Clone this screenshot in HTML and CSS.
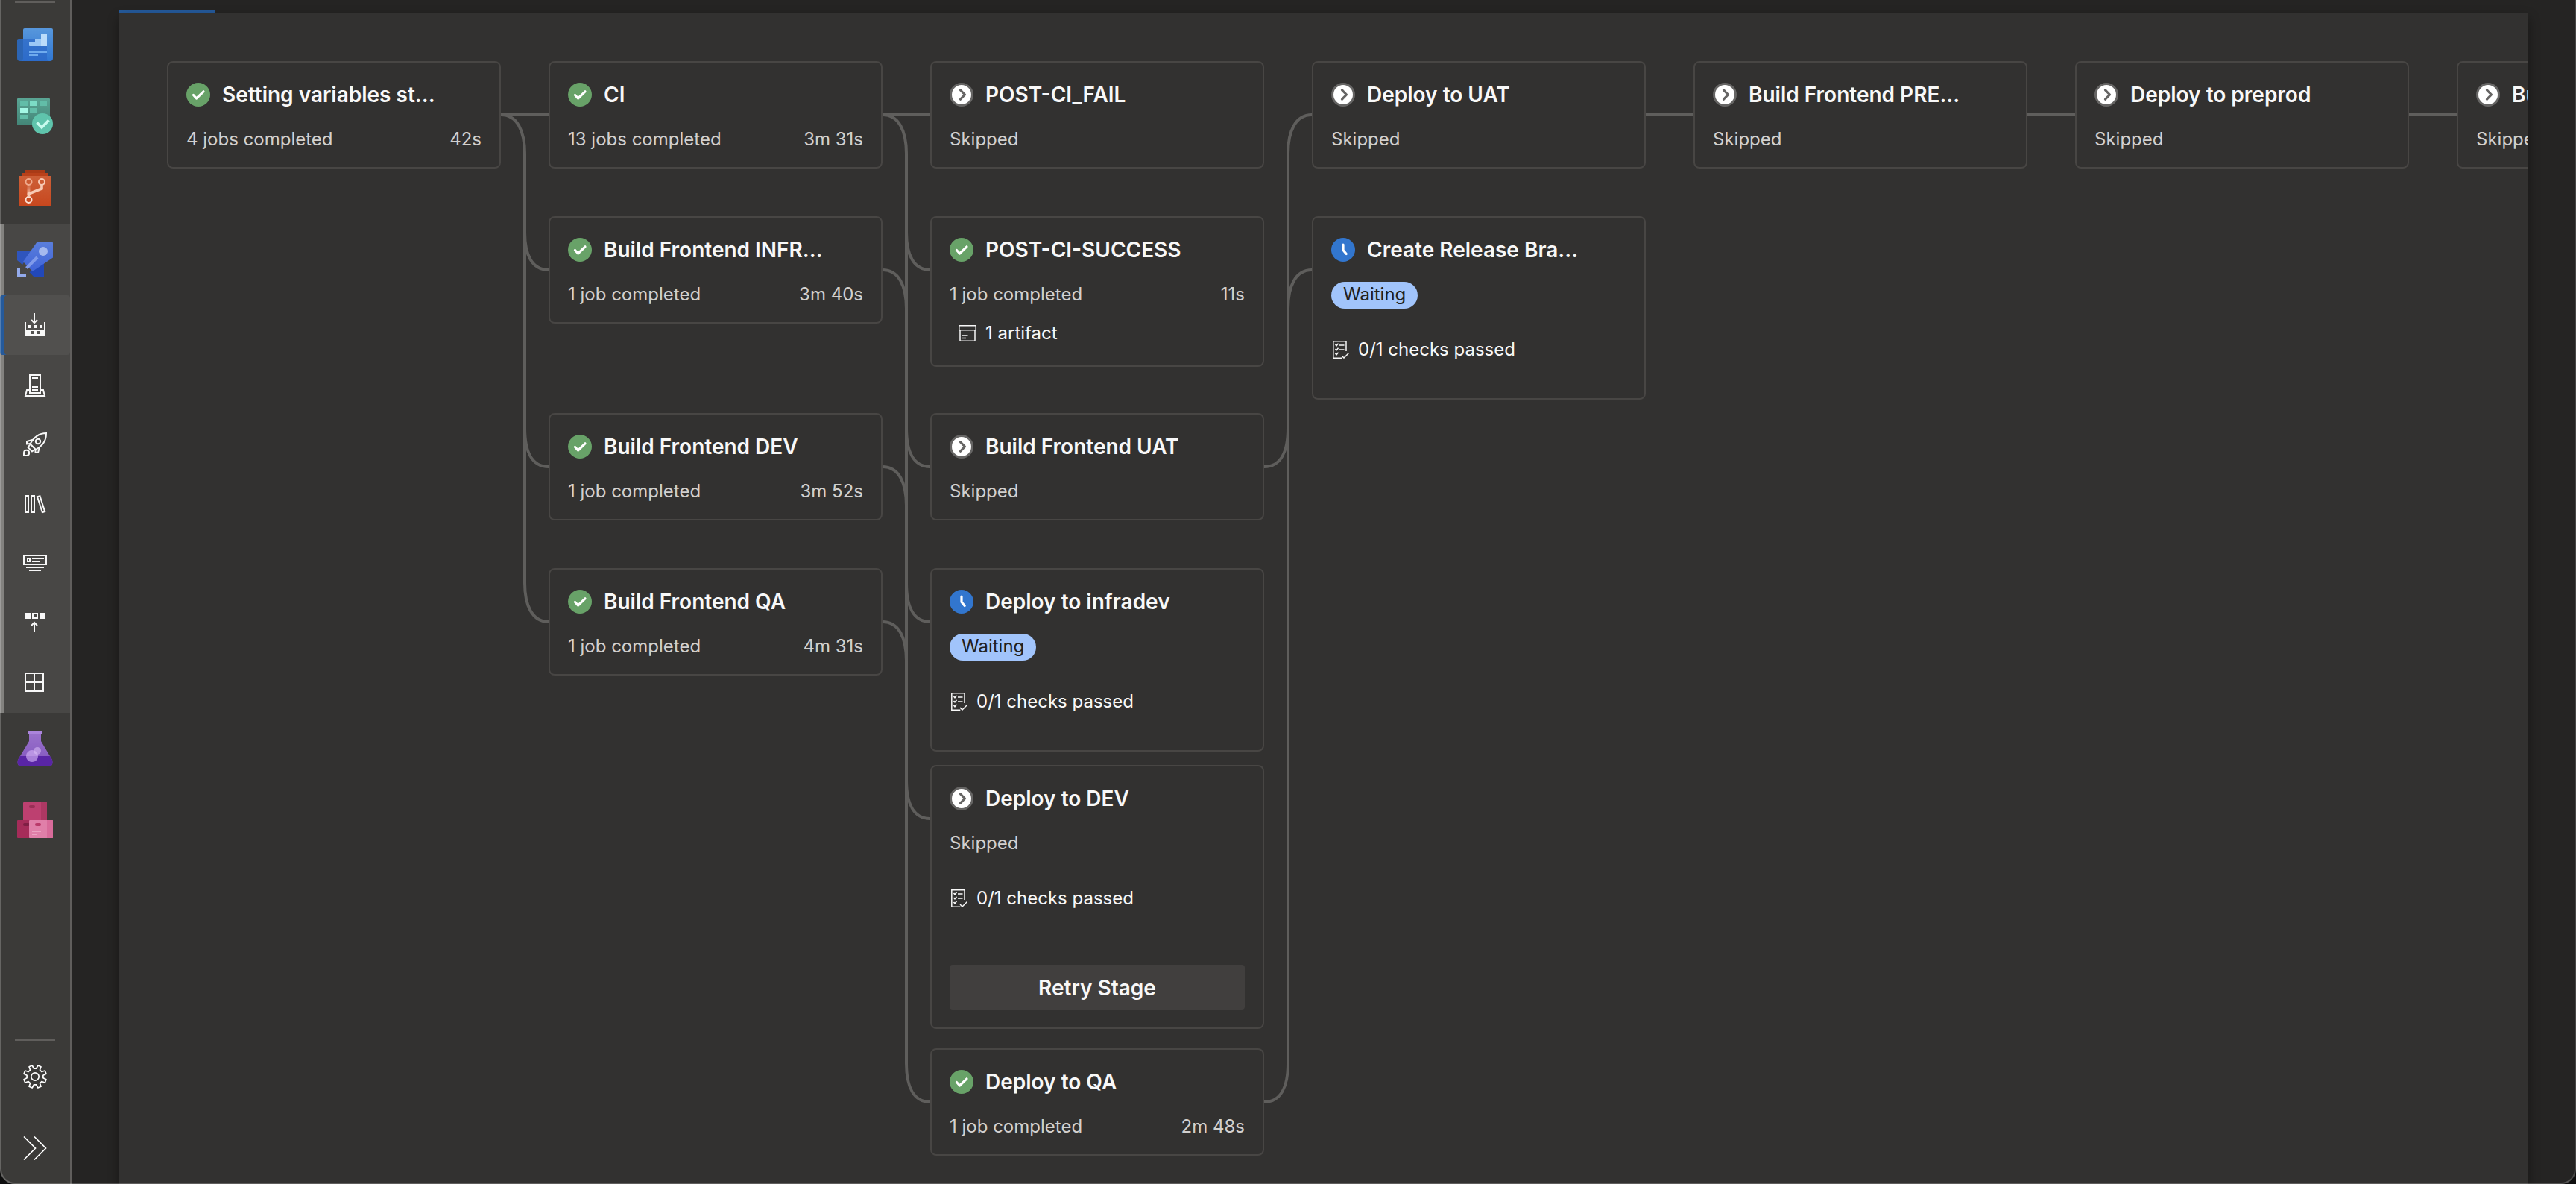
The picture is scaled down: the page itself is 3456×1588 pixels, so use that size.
FILE: index.html
```html
<!DOCTYPE html>
<html lang="en">
<head>
<meta charset="utf-8">
<title>Pipeline run - Stages</title>
<link rel="stylesheet" href="styles.css">
</head>
<body>
<svg class="defs" aria-hidden="true">
  <defs>
    <linearGradient id="g-blue" x1="0" y1="0" x2="0" y2="1"><stop offset="0" stop-color="#5797dc"/><stop offset="1" stop-color="#3077d3"/></linearGradient>
    <linearGradient id="g-green" x1="0" y1="0" x2="0" y2="1"><stop offset="0" stop-color="#5aa594"/><stop offset="1" stop-color="#438577"/></linearGradient>
    <linearGradient id="g-orange" x1="0" y1="0" x2="0" y2="1"><stop offset="0" stop-color="#cd6038"/><stop offset="1" stop-color="#c7471e"/></linearGradient>
    <linearGradient id="g-rocket" x1="0" y1="0" x2="0" y2="1"><stop offset="0" stop-color="#5a7edb"/><stop offset="1" stop-color="#4064d8"/></linearGradient>
    <linearGradient id="g-flask" x1="0" y1="0" x2="0" y2="1"><stop offset="0" stop-color="#9a72cc"/><stop offset="1" stop-color="#8155bd"/></linearGradient>
    <linearGradient id="g-branch" x1="0" y1="0" x2="0" y2="1"><stop offset="0" stop-color="#f0b9a2" stop-opacity=".1"/><stop offset="1" stop-color="#f5c8b4"/></linearGradient>
  </defs>
  <symbol id="s-success" viewBox="0 0 32 32"><circle cx="16" cy="16" r="16" fill="#68a268"/><path d="M9.500 16.500l4 4.500L23 11.800" fill="none" stroke="#fff" stroke-width="3.200" stroke-linecap="round" stroke-linejoin="round"/></symbol>
  <symbol id="s-skipped" viewBox="0 0 32 32"><circle cx="16" cy="16" r="14.500" fill="#fff" stroke="#666564" stroke-width="3"/><path d="M14.500 9.800l6 6.200-6 6.200" fill="none" stroke="#666564" stroke-width="3.200" stroke-linecap="round" stroke-linejoin="round"/></symbol>
  <symbol id="s-waiting" viewBox="0 0 32 32"><circle cx="16" cy="16" r="16" fill="#3276ce"/><path d="M16 9v7.500l4.200 5" fill="none" stroke="#fff" stroke-width="3.200" stroke-linecap="round" stroke-linejoin="round"/></symbol>
  <symbol id="i-artifact" viewBox="0 0 24 24"><path d="M.8 1.800h22.400v6H.8zM2 7.800v14.400h20V7.800M5 15h7.500M5 18.500h5" fill="none" stroke="currentColor" stroke-width="1.500"/></symbol>
  <symbol id="i-checks" viewBox="0 0 24 24"><path d="M20 14V.8H2.800v22.400h11.500" fill="none" stroke="currentColor" stroke-width="1.500"/><path d="M5.500 5l1.500 1.800 2.500-3M5.500 11l1.500 1.800 2.500-3M5.500 17l1.500 1.800 2.500-3M11 6h6.500M11 12h6.500M14 20l3 3 6.500-6.500" fill="none" stroke="currentColor" stroke-width="1.500"/></symbol>
</svg>

<div class="shell">
  <nav class="sidebar" aria-label="Project">
    <hr class="sidebar-rule">
    <ul class="hubs">
      <li><a class="hub" href="#overview" aria-label="Overview"><svg class="hub-icon" viewBox="0 0 48 48">
        <path d="M0 18q0-2 2-2h7v30H4q-4 0-4-4z" fill="#2c65b4"/><path d="M8 4q0-2 2-2h36q2 0 2 2v38q0 4-4 4H4q4 0 4-4z" fill="url(#g-blue)"/><path d="M8 16h32v26q0 4 3 4H4q4 0 4-4z" fill="#2b66c4" opacity=".65"/>
        <path d="M16 21q0-1 1-1h7v-4h8v10H17q-1 0-1-1z" fill="#9cc8f5"/><path d="M32 10h8v16h-8z" fill="#bbdcfa"/><path d="M16 33h24v2H16zM16 37h12v2H16z" fill="#6fabee"/></svg></a></li>
      <li><a class="hub" href="#boards" aria-label="Boards"><svg class="hub-icon" viewBox="0 0 48 48">
        <rect width="44" height="36" rx="1" fill="url(#g-green)"/><path d="M4 4h10v6H4zM30 4h10v6H30zM17 13h10v6H17zM4 22h10v6H4z" fill="#62bda8"/><path d="M17 4h10v6H17z" fill="#7cdcc6"/><path d="M4 13h10v6H4z" fill="#a3f7e4"/>
        <circle cx="34" cy="34" r="14" fill="#5fc4ac"/><path d="M26.500 32.500l6.500 6.500 9.500-9.800" fill="none" stroke="#c8fbee" stroke-width="3.600"/></svg></a></li>
      <li><a class="hub" href="#repos" aria-label="Repos"><svg class="hub-icon" viewBox="0 0 48 48">
        <rect x="10" width="28" height="10" rx="1" fill="#a93a16"/><rect x="6" y="4" width="36" height="10" rx="1" fill="#b9411a"/><rect x="2" y="8" width="44" height="40" rx="1" fill="url(#g-orange)"/>
        <path d="M13.500 20h4v14h-4z" fill="url(#g-branch)"/><g fill="none" stroke="#f7c9b4" stroke-width="2"><circle cx="15.500" cy="16" r="4" stroke="#f0ab8e"/><circle cx="33" cy="16" r="4"/><circle cx="15.500" cy="40" r="4" stroke="#fbe0d4"/><path d="M33 20v5L15.500 32v4" stroke-width="3.600"/></g></svg></a></li>
      <li class="hub-group">
        <a class="hub" href="#pipelines" aria-label="Pipelines"><svg class="hub-icon" viewBox="0 0 48 48">
          <path d="M0 12h20L7 31l-7-6z" fill="#2f55bd"/><path d="M36 28v20H23l-6.500-7z" fill="#2248b9"/><path d="M27 0h19q2 0 2 2v19.500L20.500 40 8 27z" fill="url(#g-rocket)"/><circle cx="35" cy="13" r="6" fill="#a5b9ee"/><path d="M27 21L12.500 35.700" stroke="#7f9aea" stroke-width="4"/><path d="M0 36h4v8h8v4H0z" fill="#93aaea"/></svg></a>
        <ul class="subhubs">
          <li><a class="subhub is-selected" href="#builds" aria-label="Pipelines" aria-current="page"><svg class="line-icon" viewBox="0 0 32 32"><path d="M2 12h2v10h24V12h2v18H2zM10 24v4h4v-4zM18 24v4h4v-4z" fill="currentColor" fill-rule="evenodd"/><path d="M6 16h4v4H6zM14 16h4v4h-4zM22 16h4v4h-4z" fill="currentColor"/><path d="M15 0v13M11 9l4 4 4-4"/></svg></a></li>
          <li><a class="subhub" href="#environments" aria-label="Environments"><svg class="line-icon" viewBox="0 0 32 32"><path d="M9 3h14v24H9zM12 7h8M12 19h8M12 23h8M9 23H5L3 31h26l-2-8h-4"/></svg></a></li>
          <li><a class="subhub" href="#releases" aria-label="Releases"><svg class="line-icon" viewBox="0 0 32 32"><path d="M31 1C21 1 14.500 6 9.500 15.500L17 23C27 17 31 11 31 1z"/><circle cx="20" cy="12" r="3.200"/><path d="M14 9.500L5 12v3.500l4.500-.5M22 19.500L20 27h-3.500v-4M9.500 16L6.500 20l5.500 5.500 4-3M1 31v-4a3.600 3.600 0 1 1 4 4z"/></svg></a></li>
          <li><a class="subhub" href="#library" aria-label="Library"><svg class="line-icon" viewBox="0 0 32 32"><path d="M3 5h4v22H3zM11 5h4v22h-4zM19 6.200l3.500-1 6.700 21-3.400 1z"/></svg></a></li>
          <li><a class="subhub" href="#taskgroups" aria-label="Task groups"><svg class="line-icon" viewBox="0 0 32 32"><path d="M1 5h30v12H1zM6 9h3v4H6zM12 9h16M12 13h10M4 21h24M8 25h16"/></svg></a></li>
          <li><a class="subhub" href="#deploymentgroups" aria-label="Deployment groups"><svg class="line-icon" viewBox="0 0 32 32"><path d="M2 2h8v8H2zM22 2h8v8h-8z" fill="currentColor"/><path d="M13 3h6v6h-6zM15 28V15M11 19l4-4 4 4"/></svg></a></li>
          <li><a class="subhub" href="#xaml" aria-label="Extensions"><svg class="line-icon" viewBox="0 0 32 32"><path d="M3 3h24v24H3zM15 3v24M3 15h24"/></svg></a></li>
        </ul>
      </li>
      <li><a class="hub" href="#testplans" aria-label="Test Plans"><svg class="hub-icon" viewBox="0 0 48 48">
        <path d="M16 2h16v12l15 25q2 9-5 9H6q-7 0-5-9l15-25z" fill="url(#g-flask)"/><path d="M4 34h40l3 5q2 9-5 9H6q-7 0-5-9z" fill="#5925a5"/><path d="M14 0h20v4H14z" fill="#ab84dc"/><circle cx="20" cy="34" r="8" fill="#d3b1f5" opacity=".65"/><circle cx="27" cy="27" r="5" fill="#dcc0f8" opacity=".55"/></svg></a></li>
      <li><a class="hub" href="#artifacts" aria-label="Artifacts"><svg class="hub-icon" viewBox="0 0 48 48">
        <rect x="8" width="32" height="26" rx="1" fill="#bd4070"/><path d="M32 0h7q1 0 1 1v24h-8z" fill="#ac3863"/><rect x="16" y="4" width="8" height="4" rx="2" fill="#992f56"/><rect y="24" width="20" height="24" rx="1" fill="#a52c59"/><rect x="8" y="28" width="9" height="4" rx="2" fill="#7f1f44"/><rect x="16" y="24" width="32" height="24" rx="1" fill="#e07fa9"/><path d="M40 24h7q1 0 1 1v22q0 1-1 1h-7z" fill="#d86b9a"/><rect x="24" y="28" width="8" height="4" rx="2" fill="#b93a6a"/><path d="M20 38h12v2H20zM20 42h7v2h-7z" fill="#eba3c2"/></svg></a></li>
    </ul>
    <hr class="sidebar-rule">
    <a class="hub" href="#settings" aria-label="Project settings"><svg class="line-icon" viewBox="-16 -16 32 32"><path d="M1.700-10.900L3.800-15 8-13.300 6.500-8.900 8.900-6.500 13.300-8 15-3.800 10.900-1.700V1.700L15 3.800 13.300 8 8.900 6.500 6.500 8.900 8 13.300 3.800 15 1.700 10.900H-1.700L-3.800 15-8 13.300-6.500 8.900-8.900 6.500-13.300 8-15 3.800-10.900 1.700V-1.700L-15-3.800-13.300-8-8.900-6.500-6.500-8.900-8-13.300-3.800-15-1.700-10.900z" stroke-width="1.700" stroke-linejoin="round"/><circle r="5.200" stroke-width="1.700"/></svg></a>
    <button class="hub" type="button" aria-label="Expand navigation"><svg class="line-icon" viewBox="0 0 32 32"><path d="M1 .5L16.500 16 1 31.500M15 .5L30.500 16 15 31.500" stroke-width="1.700"/></svg></button>
  </nav>

  <main class="content">
    <div class="tab-indicator"></div>
    <section class="panel" aria-label="Stages">
      <div class="stages">
        <svg class="connectors" aria-hidden="true">
          <path d="M448 72h64M960 72h64M1984 72h64M2496 72h64M3008 72h64"/>
          <path d="M448 72C470 72 480 94 480 124V700C480 730 490 752 512 752M480 230C480 260 490 280 512 280M480 492C480 524 490 544 512 544"/>
          <path d="M960 72C982 72 992 94 992 124V1344C992 1376 1002 1396 1024 1396M992 230C992 260 1002 280 1024 280M992 492C992 524 1002 544 1024 544M992 700C992 732 1002 752 1024 752M992 964C992 996 1002 1016 1024 1016"/>
          <path d="M960 280C982 280 992 302 992 332M960 544C982 544 992 566 992 596M960 752C982 752 992 774 992 804"/>
          <path d="M1472 1396C1494 1396 1504 1376 1504 1344V124C1504 94 1514 72 1536 72M1472 544C1494 544 1504 524 1504 492M1504 332C1504 302 1514 280 1536 280"/>
        </svg>

        <article class="stage c1 r1">
          <h2 class="stage-head"><svg class="status"><use href="#s-success"/></svg><span class="title">Setting variables st...</span></h2>
          <p class="summary"><span>4 jobs completed</span><span>42s</span></p>
        </article>

        <article class="stage c2 r1">
          <h2 class="stage-head"><svg class="status"><use href="#s-success"/></svg><span class="title">CI</span></h2>
          <p class="summary"><span>13 jobs completed</span><span>3m 31s</span></p>
        </article>
        <article class="stage c2 r2">
          <h2 class="stage-head"><svg class="status"><use href="#s-success"/></svg><span class="title">Build Frontend INFR...</span></h2>
          <p class="summary"><span>1 job completed</span><span>3m 40s</span></p>
        </article>
        <article class="stage c2 r3">
          <h2 class="stage-head"><svg class="status"><use href="#s-success"/></svg><span class="title">Build Frontend DEV</span></h2>
          <p class="summary"><span>1 job completed</span><span>3m 52s</span></p>
        </article>
        <article class="stage c2 r4">
          <h2 class="stage-head"><svg class="status"><use href="#s-success"/></svg><span class="title">Build Frontend QA</span></h2>
          <p class="summary"><span>1 job completed</span><span>4m 31s</span></p>
        </article>

        <article class="stage c3 r1">
          <h2 class="stage-head"><svg class="status"><use href="#s-skipped"/></svg><span class="title">POST-CI_FAIL</span></h2>
          <p class="summary">Skipped</p>
        </article>
        <article class="stage c3 r2">
          <h2 class="stage-head"><svg class="status"><use href="#s-success"/></svg><span class="title">POST-CI-SUCCESS</span></h2>
          <p class="summary"><span>1 job completed</span><span>11s</span></p>
          <a class="artifact" href="#artifact"><svg class="small-icon"><use href="#i-artifact"/></svg>1 artifact</a>
        </article>
        <article class="stage c3 r3">
          <h2 class="stage-head"><svg class="status"><use href="#s-skipped"/></svg><span class="title">Build Frontend UAT</span></h2>
          <p class="summary">Skipped</p>
        </article>
        <article class="stage c3 r4">
          <h2 class="stage-head"><svg class="status"><use href="#s-waiting"/></svg><span class="title">Deploy to infradev</span></h2>
          <p class="summary"><span class="pill">Waiting</span></p>
          <a class="checks" href="#checks"><svg class="small-icon"><use href="#i-checks"/></svg>0/1 checks passed</a>
        </article>
        <article class="stage c3 r5">
          <h2 class="stage-head"><svg class="status"><use href="#s-skipped"/></svg><span class="title">Deploy to DEV</span></h2>
          <p class="summary">Skipped</p>
          <a class="checks" href="#checks"><svg class="small-icon"><use href="#i-checks"/></svg>0/1 checks passed</a>
          <button class="retry" type="button">Retry Stage</button>
        </article>
        <article class="stage c3 r6">
          <h2 class="stage-head"><svg class="status"><use href="#s-success"/></svg><span class="title">Deploy to QA</span></h2>
          <p class="summary"><span>1 job completed</span><span>2m 48s</span></p>
        </article>

        <article class="stage c4 r1">
          <h2 class="stage-head"><svg class="status"><use href="#s-skipped"/></svg><span class="title">Deploy to UAT</span></h2>
          <p class="summary">Skipped</p>
        </article>
        <article class="stage c4 r2">
          <h2 class="stage-head"><svg class="status"><use href="#s-waiting"/></svg><span class="title">Create Release Bra...</span></h2>
          <p class="summary"><span class="pill">Waiting</span></p>
          <a class="checks" href="#checks"><svg class="small-icon"><use href="#i-checks"/></svg>0/1 checks passed</a>
        </article>

        <article class="stage c5 r1">
          <h2 class="stage-head"><svg class="status"><use href="#s-skipped"/></svg><span class="title">Build Frontend PRE...</span></h2>
          <p class="summary">Skipped</p>
        </article>
        <article class="stage c6 r1">
          <h2 class="stage-head"><svg class="status"><use href="#s-skipped"/></svg><span class="title">Deploy to preprod</span></h2>
          <p class="summary">Skipped</p>
        </article>
        <article class="stage c7 r1">
          <h2 class="stage-head"><svg class="status"><use href="#s-skipped"/></svg><span class="title">Build</span></h2>
          <p class="summary">Skipped</p>
        </article>
      </div>
    </section>
  </main>
</div>
</body>
</html>
```
FILE: styles.css
```css
* {
  box-sizing: border-box;
}

body {
  margin: 0;
  background: #252423;
  color: #f8f8f8;
  font-family: Inter, "Liberation Sans", sans-serif;
  font-size: 24px;
  line-height: 34px;
}

/* Window frame with rounded bottom corners */
body::after {
  content: "";
  position: fixed;
  inset: 0;
  border: 2px solid rgba(255, 255, 255, 0.22);
  border-top: 0;
  border-right-color: rgba(255, 255, 255, 0.16);
  border-radius: 0 0 20px 20px;
  box-shadow: 0 0 0 20px #0e0e0e;
  pointer-events: none;
}

ul {
  margin: 0;
  padding: 0;
  list-style: none;
}

a {
  color: inherit;
  text-decoration: none;
}

.defs {
  position: absolute;
  width: 0;
  height: 0;
}

.shell {
  display: flex;
  min-height: 100vh;
}

/* Sidebar */
.sidebar {
  display: flex;
  flex: none;
  flex-direction: column;
  width: 96px;
  padding-top: 2px;
  border-right: 2px solid #605e5c;
  background: #3b3a38;
}

.sidebar-rule {
  width: 54px;
  height: 2px;
  margin: 0 20px;
  border: 0;
  background: #605e5c;
}

.hubs {
  flex: 1;
  padding-top: 8px;
}

.hub {
  display: flex;
  align-items: center;
  justify-content: center;
  width: 100%;
  height: 96px;
  padding: 0;
  border: 0;
  background: none;
  color: #fff;
}

.hub-icon {
  width: 48px;
  height: 48px;
}

.line-icon {
  width: 32px;
  height: 32px;
  overflow: visible;
  fill: none;
  stroke: currentColor;
  stroke-width: 2;
}

.line-icon [fill="currentColor"] {
  stroke: none;
}

.hub-group {
  background: #484745;
  box-shadow: inset 6px 0 #83827f;
}

.subhub {
  display: flex;
  align-items: center;
  justify-content: center;
  height: 80px;
  color: #f8f8f8;
}

.subhub.is-selected {
  border-radius: 4px;
  background: #51504e;
  box-shadow: inset 6px 0 #255a9b;
}

/* Content */
.content {
  display: flex;
  flex: 1;
  flex-direction: column;
  min-width: 0;
  padding: 14px 64px 0;
  overflow: hidden;
}

.tab-indicator {
  width: 129px;
  height: 4px;
  background: #255a9b;
}

.panel {
  flex: 1;
  padding: 64px 64px 38px;
  overflow: hidden;
  background: #323130;
  box-shadow: 0 6px 14px rgba(0, 0, 0, 0.4);
}

.stages {
  position: relative;
  display: grid;
  grid-template-columns: repeat(7, 448px);
  grid-template-rows: 208px 264px 208px 264px 380px auto;
  column-gap: 64px;
  align-items: start;
}

.connectors {
  position: absolute;
  inset: 0;
  width: 100%;
  height: 100%;
  overflow: visible;
  fill: none;
  stroke: #5f5e5c;
  stroke-width: 4;
}

.c1 { grid-column: 1; }
.c2 { grid-column: 2; }
.c3 { grid-column: 3; }
.c4 { grid-column: 4; }
.c5 { grid-column: 5; }
.c6 { grid-column: 6; }
.c7 { grid-column: 7; }
.r1 { grid-row: 1; }
.r2 { grid-row: 2; }
.r3 { grid-row: 3; }
.r4 { grid-row: 4; }
.r5 { grid-row: 5; }
.r6 { grid-row: 6; }

/* Stage card */
.stage {
  display: flex;
  flex-direction: column;
  padding: 24px 24px 18px;
  border: 2px solid #484644;
  border-radius: 8px;
}

.stage-head {
  display: flex;
  align-items: center;
  gap: 16px;
  margin: 0;
  font-size: 28px;
  font-weight: 600;
  line-height: 38px;
}

.status {
  flex: none;
  width: 32px;
  height: 32px;
}

.title {
  white-space: nowrap;
}

.summary {
  display: flex;
  justify-content: space-between;
  height: 36px;
  margin: 24px 0 0;
  color: #d2d0ce;
}

.pill {
  height: 36px;
  padding: 0 16px;
  border-radius: 18px;
  background: #a1c4fb;
  color: #201f1e;
}

.small-icon {
  flex: none;
  width: 24px;
  height: 24px;
}

.artifact,
.checks {
  display: flex;
  align-items: center;
  gap: 12px;
}

.artifact {
  margin: 16px 0 8px;
  padding-left: 12px;
}

.checks {
  margin: 38px 0 30px;
}

.retry {
  height: 60px;
  margin: 42px 0 6px;
  padding: 2px 0 0;
  border: 0;
  border-radius: 4px;
  background: #413f3e;
  color: #f8f8f8;
  font: 600 28px/38px Inter, "Liberation Sans", sans-serif;
}
```
